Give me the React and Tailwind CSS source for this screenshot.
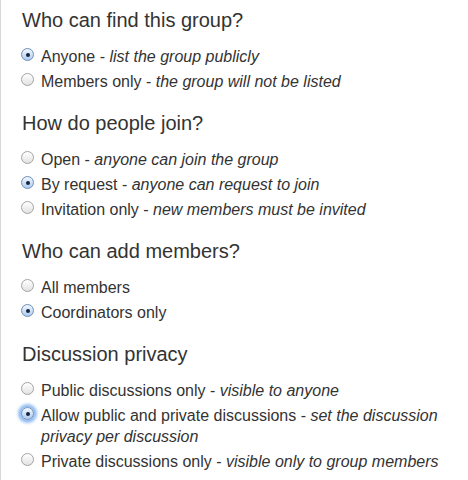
import React from "react";

function Radio({ checked, focus }) {
  return (
    <span
      className={
        "relative mt-[2px] inline-flex h-[13px] w-[13px] shrink-0 items-center justify-center rounded-full border " +
        (checked
          ? "border-[#6f8db5] bg-[linear-gradient(#f2f8ff,#aecbef)]"
          : "border-[#a3a3a3] bg-[linear-gradient(#ffffff,#e2e2e2)]") +
        (focus ? " shadow-[0_0_3px_3px_rgba(95,160,235,0.7)]" : "")
      }
    >
      {checked && <span className="h-[4px] w-[4px] rounded-full bg-[#15243a]" />}
    </span>
  );
}

function Option({ label, desc, checked, focus }) {
  return (
    <div className="flex items-start gap-[7px] mb-[4px]">
      <Radio checked={checked} focus={focus} />
      <div className="leading-[21px] w-[414px]">
        {label}
        {desc && (
          <>
            {" - "}
            <i>{desc}</i>
          </>
        )}
      </div>
    </div>
  );
}

function Section({ title, children }) {
  return (
    <div className="mb-[19px]">
      <h2 className="text-[20px] leading-[24px] mb-[14px] pl-[1px]">{title}</h2>
      {children}
    </div>
  );
}

export default function App() {
  return (
    <div
      className="w-[468px] h-[480px] bg-white border-l border-[#d8d8d8] pl-[20px] pt-[8px] text-[#333] text-[16px] overflow-hidden"
      style={{ fontFamily: '"Liberation Sans", Arial, sans-serif' }}
    >
      <Section title="Who can find this group?">
        <Option label="Anyone" desc="list the group publicly" checked />
        <Option label="Members only" desc="the group will not be listed" />
      </Section>
      <Section title="How do people join?">
        <Option label="Open" desc="anyone can join the group" />
        <Option label="By request" desc="anyone can request to join" checked />
        <Option label="Invitation only" desc="new members must be invited" />
      </Section>
      <Section title="Who can add members?">
        <Option label="All members" />
        <Option label="Coordinators only" checked />
      </Section>
      <Section title="Discussion privacy">
        <Option label="Public discussions only" desc="visible to anyone" />
        <Option
          label="Allow public and private discussions"
          desc="set the discussion privacy per discussion"
          checked
          focus
        />
        <Option label="Private discussions only" desc="visible only to group members" />
      </Section>
    </div>
  );
}
